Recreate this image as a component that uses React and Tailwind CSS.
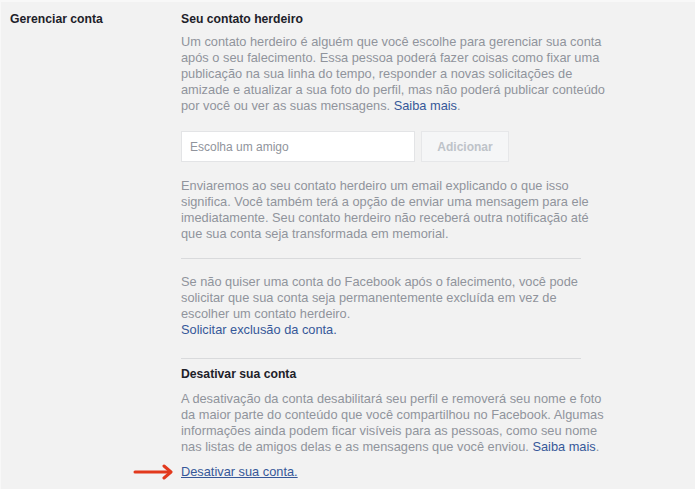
export default function App() {
  const body = "text-[12.8px] leading-[16px] text-[#90949c] w-[430px]";
  const head = "text-[12.2px] leading-[16px] font-bold text-[#1d2129]";
  const link = "text-[#365899]";
  return (
    <div
      className="w-[695px] h-[489px] overflow-hidden bg-[#f2f2f2] border-t-2 border-l border-[#f8f8f8]"
      style={{ fontFamily: '"Liberation Sans", Arial, sans-serif' }}
    >
      <div className="flex pt-[9px]">
        <div className={"w-[180px] pl-[9px] " + head}>Gerenciar conta</div>
        <div className="w-[400px] flex flex-col">
          <div className={head}>Seu contato herdeiro</div>
          <p className={"mt-[7px] " + body}>
            Um contato herdeiro é alguém que você escolhe para gerenciar sua conta
            <br />
            após o seu falecimento. Essa pessoa poderá fazer coisas como fixar uma
            <br />
            publicação na sua linha do tempo, responder a novas solicitações de
            <br />
            amizade e atualizar a sua foto do perfil, mas não poderá publicar conteúdo
            <br />
            por você ou ver as suas mensagens. <span className={link}>Saiba mais</span>.
          </p>
          <div className="mt-[17px] flex gap-[6px]">
            <div className="w-[234px] h-[31px] bg-white border border-[#e3e4e6] flex items-center px-[8px] text-[12px] text-[#90949c]">
              Escolha um amigo
            </div>
            <div className="w-[88px] h-[31px] bg-[#f5f6f7] border border-[#e6e7e9] flex items-center justify-center text-[12px] font-bold text-[#bec3c9]">
              Adicionar
            </div>
          </div>
          <p className={"mt-[16px] " + body}>
            Enviaremos ao seu contato herdeiro um email explicando o que isso
            <br />
            significa. Você também terá a opção de enviar uma mensagem para ele
            <br />
            imediatamente. Seu contato herdeiro não receberá outra notificação até
            <br />
            que sua conta seja transformada em memorial.
          </p>
          <div className="mt-[16px] h-px bg-[#d9dadc]" />
          <p className={"mt-[15px] " + body}>
            Se não quiser uma conta do Facebook após o falecimento, você pode
            <br />
            solicitar que sua conta seja permanentemente excluída em vez de
            <br />
            escolher um contato herdeiro.
            <br />
            <span className={link}>Solicitar exclusão da conta.</span>
          </p>
          <div className="mt-[20px] h-px bg-[#d9dadc]" />
          <div className={"mt-[7px] " + head}>Desativar sua conta</div>
          <p className={"mt-[9px] " + body}>
            A desativação da conta desabilitará seu perfil e removerá seu nome e foto
            <br />
            da maior parte do conteúdo que você compartilhou no Facebook. Algumas
            <br />
            informações ainda podem ficar visíveis para as pessoas, como seu nome
            <br />
            nas listas de amigos delas e as mensagens que você enviou. <span className={link}>Saiba mais</span>.
          </p>
          <div className="mt-[9px] relative text-[12.8px] leading-[16px]">
            <svg
              className="absolute left-[-48px] top-[0px]"
              width="42"
              height="16"
              viewBox="0 0 42 16"
              fill="none"
            >
              <path d="M2 8 H37" stroke="#e2391d" strokeWidth="3" strokeLinecap="round" />
              <path d="M31 2 L38 8 L31 14" stroke="#e2391d" strokeWidth="3" strokeLinecap="round" strokeLinejoin="round" />
            </svg>
            <span className={link + " underline"}>Desativar sua conta.</span>
          </div>
        </div>
      </div>
    </div>
  );
}
